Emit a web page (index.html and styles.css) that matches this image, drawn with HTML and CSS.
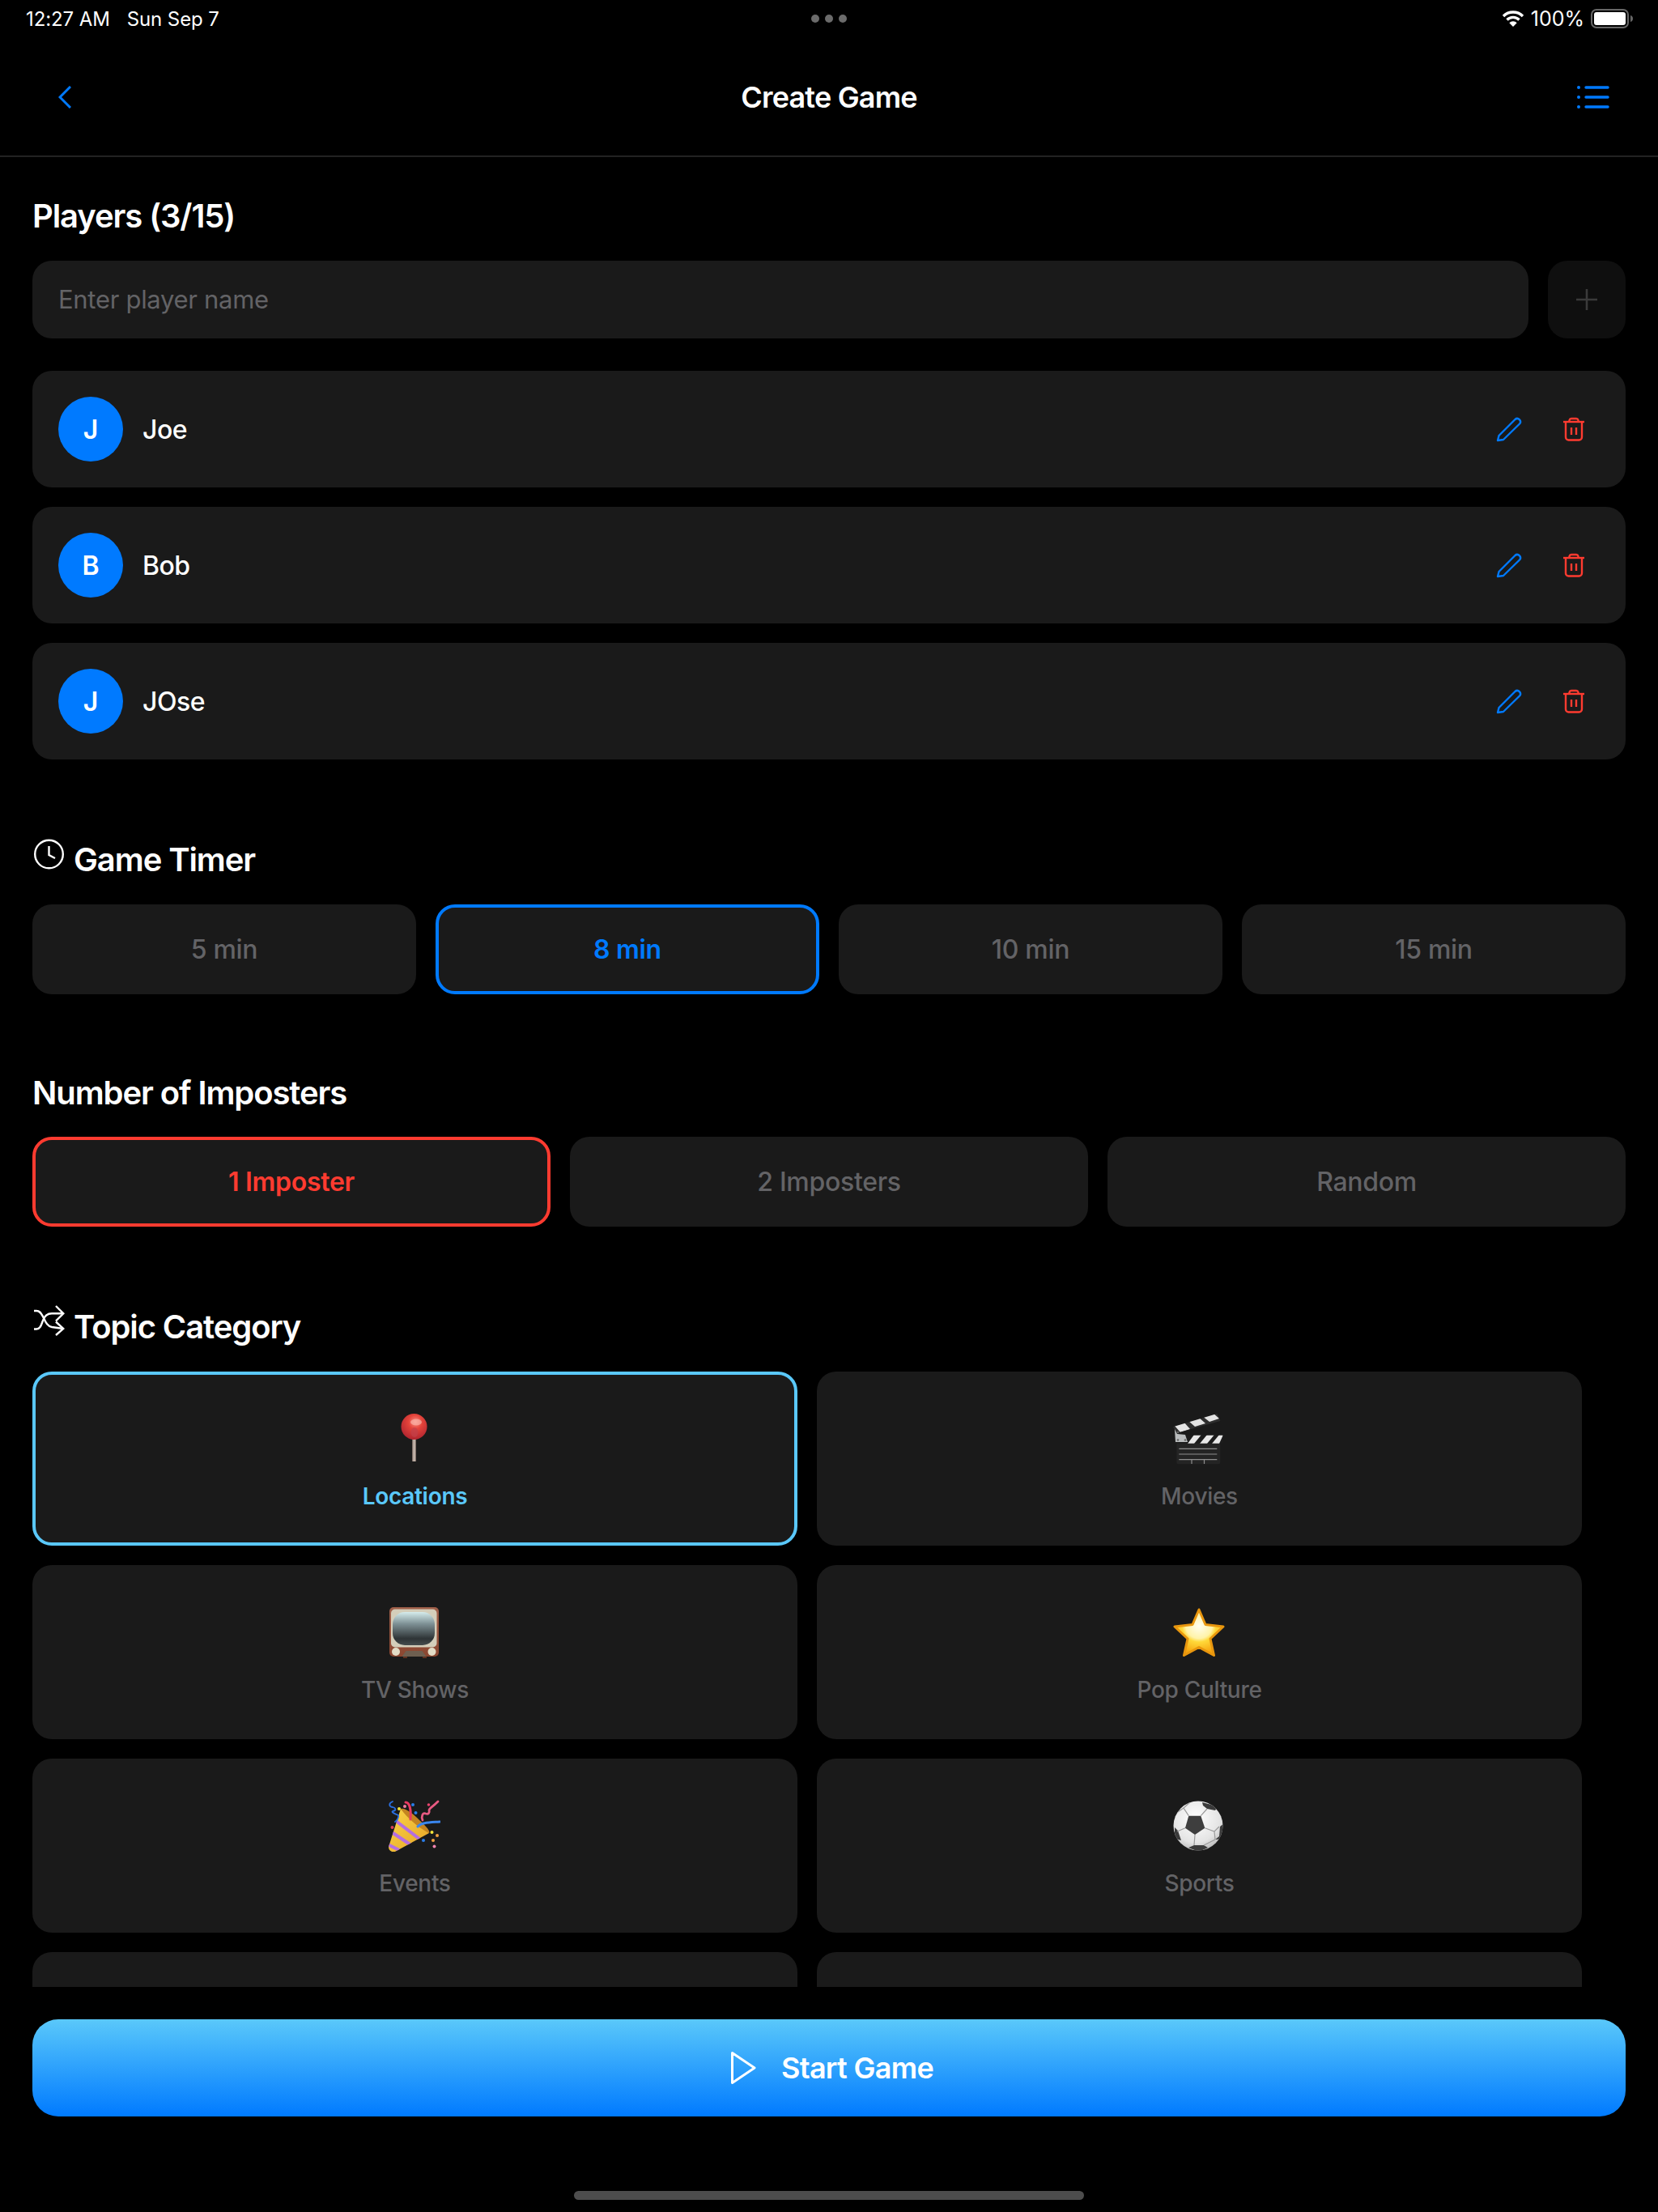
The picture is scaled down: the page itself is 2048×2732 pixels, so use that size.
FILE: index.html
```html
<!DOCTYPE html>
<html>
    <head>
        <meta charset="UTF-8">
        <title>Create Game</title>
        <link rel="stylesheet" href="styles.css">
    </head>
    <body>
        <div class="statusbar">
            <div class="status-left"><span>12:27 AM</span><span>Sun Sep 7</span></div>
            <div class="status-dots"><i></i><i></i><i></i></div>
            <div class="status-right">
                <svg class="wifi" width="28" height="22" viewBox="0 0 28 22"><path d="M2 8A17 17 0 0 1 26 8" fill="none" stroke="#fff" stroke-width="3.4"/><path d="M6.5 12.5A10.6 10.6 0 0 1 21.5 12.5" fill="none" stroke="#fff" stroke-width="3.4"/><path d="M14 21L9.3 16.2A6.6 6.6 0 0 1 18.7 16.2Z" fill="#fff"/></svg>
                <span>100%</span>
                <svg class="battery" width="53" height="24" viewBox="0 0 53 24"><rect x="1" y="1" width="45" height="22" rx="6" fill="none" stroke="#666" stroke-width="2"/><rect x="4" y="4" width="39" height="16" rx="3" fill="#fff"/><path d="M49 8C51 8.500 52 10 52 12S51 15.500 49 16Z" fill="#666"/></svg>
            </div>
        </div>

        <div class="navbar">
            <div class="nav-left">
                <svg width="16" height="28" viewBox="0 0 16 28"><path d="M15 1L2 14L15 27" fill="none" stroke="#007aff" stroke-width="3"/></svg>
            </div>
            <div class="nav-title">Create Game</div>
            <div class="nav-right">
                <svg width="40" height="28" viewBox="0 0 40 28"><g fill="#007aff"><circle cx="2" cy="2" r="2"/><circle cx="2" cy="14" r="2"/><circle cx="2" cy="26" r="2"/></g><g stroke="#007aff" stroke-width="3.400" stroke-linecap="round"><path d="M11 2H38"/><path d="M11 14H38"/><path d="M11 26H38"/></g></svg>
            </div>
        </div>

        <div class="content">
            <h2 class="title players-title">Players (3/15)</h2>
            <div class="add-row">
                <div class="name-input">Enter player name</div>
                <div class="add-btn">
                    <svg width="28" height="28" viewBox="0 0 28 28"><path d="M14 1V27M1 14H27" stroke="#3a3a3a" stroke-width="2.600"/></svg>
                </div>
            </div>
            <div class="player-list">
                <div class="player">
                    <div class="avatar">J</div>
                    <div class="player-name">Joe</div>
                    <svg class="edit-icon" width="32" height="32" viewBox="0 0 32 32"><path d="M2 30L3.500 24L23.500 4A3.900 3.900 0 0 1 29 9.500L9 29Z" fill="none" stroke="#007aff" stroke-width="2.400" stroke-linejoin="round"/></svg>
                    <svg class="trash-icon" width="32" height="32" viewBox="0 0 32 32"><g fill="none" stroke="#ff3b30" stroke-width="2.400" stroke-linejoin="round"><path d="M3 7H29"/><path d="M10.500 7V5A2.800 2.800 0 0 1 13 3H19A2.800 2.800 0 0 1 21.500 5V7"/><path d="M6 7V26A3.500 3.500 0 0 0 9.500 29.500H22.500A3.500 3.500 0 0 0 26 26V7"/><path d="M13 14V23M19 14V23"/></g></svg>
                </div>
                <div class="player">
                    <div class="avatar">B</div>
                    <div class="player-name">Bob</div>
                    <svg class="edit-icon" width="32" height="32" viewBox="0 0 32 32"><path d="M2 30L3.500 24L23.500 4A3.900 3.900 0 0 1 29 9.500L9 29Z" fill="none" stroke="#007aff" stroke-width="2.400" stroke-linejoin="round"/></svg>
                    <svg class="trash-icon" width="32" height="32" viewBox="0 0 32 32"><g fill="none" stroke="#ff3b30" stroke-width="2.400" stroke-linejoin="round"><path d="M3 7H29"/><path d="M10.500 7V5A2.800 2.800 0 0 1 13 3H19A2.800 2.800 0 0 1 21.500 5V7"/><path d="M6 7V26A3.500 3.500 0 0 0 9.500 29.500H22.500A3.500 3.500 0 0 0 26 26V7"/><path d="M13 14V23M19 14V23"/></g></svg>
                </div>
                <div class="player">
                    <div class="avatar">J</div>
                    <div class="player-name">JOse</div>
                    <svg class="edit-icon" width="32" height="32" viewBox="0 0 32 32"><path d="M2 30L3.500 24L23.500 4A3.900 3.900 0 0 1 29 9.500L9 29Z" fill="none" stroke="#007aff" stroke-width="2.400" stroke-linejoin="round"/></svg>
                    <svg class="trash-icon" width="32" height="32" viewBox="0 0 32 32"><g fill="none" stroke="#ff3b30" stroke-width="2.400" stroke-linejoin="round"><path d="M3 7H29"/><path d="M10.500 7V5A2.800 2.800 0 0 1 13 3H19A2.800 2.800 0 0 1 21.500 5V7"/><path d="M6 7V26A3.500 3.500 0 0 0 9.500 29.500H22.500A3.500 3.500 0 0 0 26 26V7"/><path d="M13 14V23M19 14V23"/></g></svg>
                </div>
            </div>

            <h2 class="title section-title">
                <svg class="title-icon" width="40" height="40" viewBox="0 0 40 40"><circle cx="20.500" cy="20" r="17.300" fill="none" stroke="#fff" stroke-width="2.400"/><path d="M20.500 10V21L28 25" fill="none" stroke="#fff" stroke-width="2.400"/></svg>
                Game Timer
            </h2>
            <div class="options four">
                <div class="option">5 min</div>
                <div class="option timer-on">8 min</div>
                <div class="option">10 min</div>
                <div class="option">15 min</div>
            </div>

            <h2 class="title section-title plain">Number of Imposters</h2>
            <div class="options three">
                <div class="option imposter-on">1 Imposter</div>
                <div class="option">2 Imposters</div>
                <div class="option">Random</div>
            </div>

            <h2 class="title section-title">
                <svg class="title-icon" width="40" height="40" viewBox="0 0 40 40"><g fill="none" stroke="#fff" stroke-width="2.400"><path d="M29 1L38.300 10.300L29 19.500"/><path d="M29 20.500L38.300 29L29 37"/><path d="M2 7H5C10 7 11 11 13.500 15C16 20 18 26 24 27L38 29"/><path d="M2 29.500H5C10 29.500 11 24 13 19C15 13 18 10.300 24 10.300H38"/></g></svg>
                Topic Category
            </h2>
            <div class="topics">
                <div class="topic topic-on">
                    <svg class="emoji" width="64" height="64" viewBox="0 0 64 64">
                        <defs>
                            <radialGradient id="pinBall" cx="55%" cy="32%" r="68%"><stop offset="0" stop-color="#f88c80"/><stop offset=".4" stop-color="#e4433a"/><stop offset="1" stop-color="#b02530"/></radialGradient>
                            <linearGradient id="pinStem" x1="0" x2="1" y1="0" y2="0"><stop offset="0" stop-color="#6e5f58"/><stop offset=".5" stop-color="#d0c2b8"/><stop offset="1" stop-color="#7a6a62"/></linearGradient>
                        </defs>
                        <rect x="29" y="30" width="5" height="30" fill="url(#pinStem)"/>
                        <circle cx="31.500" cy="17" r="16" fill="url(#pinBall)"/>
                        <ellipse cx="32" cy="24" rx="4.500" ry="6" fill="#c0404a" opacity=".7"/>
                        <ellipse cx="34" cy="11.500" rx="7" ry="4" fill="#fcc0b4" opacity=".6"/>
                    </svg>
                    <div class="topic-label">Locations</div>
                </div>
                <div class="topic">
                    <svg class="emoji" width="64" height="64" viewBox="0 0 64 64">
                        <defs>
                            <clipPath id="armClip"><path d="M0 17.300L54.300 1L58.300 10L4.300 25Z"/></clipPath>
                            <clipPath id="bandClip"><rect x="1" y="27.700" width="61" height="10" rx="1"/></clipPath>
                        </defs>
                        <path d="M0 17.300L54.300 1L58.300 10L4.300 25Z" fill="#2e2e2e"/>
                        <g clip-path="url(#armClip)" fill="#e4e4e4"><path d="M1 15L13 11L21 20L9 24Z"/><path d="M18 9L31 5L40 13L27 17Z"/><path d="M36 4L49 0L57 7L45 11Z"/></g>
                        <rect x="4.300" y="37" width="54" height="26.300" rx="2.500" fill="#242424"/>
                        <rect x="1" y="27.700" width="61" height="10" rx="1" fill="#1c1c1c"/>
                        <g clip-path="url(#bandClip)" fill="#e8e8e8"><path d="M18 38L26 27H35L26 38Z"/><path d="M33 38L42 27H51L42 38Z"/><path d="M48 38L57 27H62L57 38Z"/></g>
                        <path d="M2 20L5 26L15 27L18 36H3Z" fill="#b9bcbd"/>
                        <circle cx="6" cy="33.500" r="1.300" fill="#666"/><circle cx="15" cy="33.500" r="1.300" fill="#666"/><circle cx="6" cy="24" r="1.300" fill="#666"/>
                        <g stroke="#8e8e8e" stroke-width="1.200"><path d="M7.300 44.300H54.300"/><path d="M7.300 51H54.300"/><path d="M7.300 57.700H54.300"/><path d="M23 57.700V63M38.500 57.700V63"/></g>
                    </svg>
                    <div class="topic-label">Movies</div>
                </div>
                <div class="topic">
                    <svg class="emoji" width="64" height="64" viewBox="0 0 64 64">
                        <defs>
                            <linearGradient id="tvScreen" x1="0" x2="0" y1="0" y2="1"><stop offset="0" stop-color="#d5ecec"/><stop offset=".35" stop-color="#7f9296"/><stop offset=".8" stop-color="#2e3436"/><stop offset="1" stop-color="#454c4d"/></linearGradient>
                            <linearGradient id="tvWood" x1="0" x2="0" y1="0" y2="1"><stop offset="0" stop-color="#a0604a"/><stop offset="1" stop-color="#8a4630"/></linearGradient>
                        </defs>
                        <rect x="18" y="60" width="5" height="4" fill="#5e2f1e"/><rect x="42" y="60" width="5" height="4" fill="#5e2f1e"/>
                        <rect x="1" y="1" width="61" height="61" rx="5" fill="url(#tvWood)"/>
                        <rect x="3" y="3.500" width="56.500" height="47" rx="5" fill="#d4ceba"/>
                        <rect x="5" y="7" width="52" height="41" rx="15" fill="url(#tvScreen)"/>
                        <circle cx="9" cy="56" r="5" fill="#e2dcc6"/><circle cx="53.500" cy="56" r="5" fill="#e2dcc6"/>
                        <path d="M16.500 62L21.500 55H41.500L46.500 62Z" fill="#6e5f50"/>
                    </svg>
                    <div class="topic-label">TV Shows</div>
                </div>
                <div class="topic">
                    <svg class="emoji" width="64" height="64" viewBox="0 0 64 64">
                        <defs>
                            <radialGradient id="starFill" cx="50%" cy="36%" r="60%"><stop offset="0" stop-color="#fffef0"/><stop offset=".45" stop-color="#fff3a8"/><stop offset=".58" stop-color="#ffd93a"/><stop offset="1" stop-color="#f6a50e"/></radialGradient>
                        </defs>
                        <path d="M32 4L40 22.500L62 25L46 40L50.500 60.500L32 50.500L13.500 60.500L18 40L2 25L24 22.500Z" fill="url(#starFill)" stroke="#e8960e" stroke-width="3" stroke-linejoin="round"/>
                    </svg>
                    <div class="topic-label">Pop Culture</div>
                </div>
                <div class="topic">
                    <svg class="emoji" width="64" height="64" viewBox="0 0 64 64">
                        <defs>
                            <linearGradient id="coneFill" x1="0" x2="1" y1="0" y2="1"><stop offset="0" stop-color="#fad648"/><stop offset="1" stop-color="#e6a226"/></linearGradient>
                            <clipPath id="coneClip"><path d="M0 58L15 11L50 41L7 64.500Q0 64 0 58Z"/></clipPath>
                        </defs>
                        <path d="M0 58L15 11L50 41L7 64.500Q0 64 0 58Z" fill="url(#coneFill)"/>
                        <g clip-path="url(#coneClip)" stroke="#b46ee0" stroke-width="4" fill="none"><path d="M9 26L39 49"/><path d="M4 40L28 56"/><path d="M-1 55L13 62"/></g>
                        <path d="M15 11C20 9 30 17 38 25C46 32 52 39 50 41C40 36 25 25 15 11Z" fill="#c48420"/>
                        <g fill="none" stroke-linecap="round">
                            <path d="M5 2C0 4 0 8 5 9C9 10 10 13 5 14C3 15 7 17 12 19C13 22 10 26 8 27" stroke="#2a6fe0" stroke-width="1.800"/>
                            <path d="M21 3C26 3 28 12 27 24" stroke="#ea3a62" stroke-width="3"/>
                            <path d="M42 25C40 21 42 15 46 17C49 18 51 16 50 13C50 10 53 10 61 2" stroke="#e85a82" stroke-width="2.800"/>
                            <path d="M36 33C40 28 50 28 63 27" stroke="#3a86ee" stroke-width="3"/>
                        </g>
                        <circle cx="13" cy="11" r="2" fill="#f5e43a"/><circle cx="20" cy="8" r="2" fill="#f07aa0"/><circle cx="30" cy="6" r="2" fill="#2a7de8"/><circle cx="33.500" cy="16" r="2" fill="#2a7de8"/><circle cx="49.500" cy="6" r="1.800" fill="#e8456e"/><circle cx="4.500" cy="34" r="2" fill="#d84058"/><circle cx="53.500" cy="40" r="2" fill="#f5e43a"/><circle cx="60" cy="44" r="2" fill="#f0a040"/><circle cx="43" cy="50" r="2" fill="#2a7de8"/><circle cx="55" cy="50" r="2" fill="#f0a040"/><circle cx="56.500" cy="57.500" r="2" fill="#f084b0"/>
                    </svg>
                    <div class="topic-label">Events</div>
                </div>
                <div class="topic">
                    <svg class="emoji" width="64" height="64" viewBox="0 0 64 64">
                        <defs>
                            <radialGradient id="ballFill" cx="45%" cy="35%" r="70%"><stop offset="0" stop-color="#fff"/><stop offset=".7" stop-color="#e4e4e4"/><stop offset="1" stop-color="#b4b4b4"/></radialGradient>
                            <clipPath id="ballClip"><circle cx="31" cy="32" r="30.500"/></clipPath>
                        </defs>
                        <circle cx="31" cy="32" r="30.500" fill="url(#ballFill)"/>
                        <g clip-path="url(#ballClip)">
                            <path d="M19.300 19.700H34.300L39.300 34.700L27 43L15 34.700Z" fill="#3e3e3e"/>
                            <path d="M36 3L55 8L52 13L42 11L37 7Z" fill="#3a3a3a"/>
                            <path d="M63 29L58 33L57 45L52 49L63 48Z" fill="#3a3a3a"/>
                            <path d="M19 59L26 56H38L43 59L32 64Z" fill="#3a3a3a"/>
                            <path d="M2 34L6 38L10 50L2 48Z" fill="#3a3a3a"/>
                            <path d="M19.300 19.700L13 10L22 2M34.300 19.700L42 11M39.300 34.700L51 39L57 33M51 39L52 49M27 43L26 56M52 49L38 56M15 34.700L5 39M13 10L3 17" fill="none" stroke="#9a9a9a" stroke-width="1.200"/>
                        </g>
                    </svg>
                    <div class="topic-label">Sports</div>
                </div>
                <div class="topic"></div>
                <div class="topic"></div>
            </div>
        </div>

        <div class="footer">
            <div class="start-btn">
                <svg width="40" height="42" viewBox="0 0 40 42"><path d="M9.500 2.500L37 21L9.500 39.500Z" fill="none" stroke="#fff" stroke-width="3" stroke-linejoin="round"/></svg>
                <span>Start Game</span>
            </div>
            <div class="home-bar"></div>
        </div>
    </body>
</html>
```

FILE: styles.css
```css
* {
    box-sizing: border-box;
}
html, body {
    margin: 0;
    height: 100%;
}
body {
    background-color: #000;
    color: #fff;
    font-family: Inter, "Liberation Sans", sans-serif;
    overflow: hidden;
}

/* status bar */
.statusbar {
    height: 46px;
    display: grid;
    grid-template-columns: 1fr auto 1fr;
    align-items: center;
    padding: 0 30px;
    font-size: 24px;
}
.status-left {
    display: flex;
    gap: 21px;
    letter-spacing: -0.1px;
    padding-left: 2px;
}
.status-dots {
    display: flex;
    gap: 7px;
}
.status-dots i {
    width: 10px;
    height: 10px;
    border-radius: 50%;
    background-color: #6b6b6b;
}
.status-right {
    display: flex;
    justify-content: flex-end;
    align-items: center;
    gap: 8px;
    font-size: 25px;
}

/* nav */
.navbar {
    height: 148px;
    display: grid;
    grid-template-columns: 1fr auto 1fr;
    align-items: center;
    padding: 2px 60px 0;
    border-bottom: 2px solid #222;
}
.nav-left {
    padding-left: 12px;
}
.nav-left svg, .nav-right svg {
    display: block;
}
.nav-right {
    display: flex;
    justify-content: flex-end;
}
.nav-title {
    font-size: 36px;
    font-weight: 600;
    letter-spacing: -0.8px;
}

/* main scroll area */
.content {
    height: 2260px;
    overflow: hidden;
    padding: 49px 40px 0;
}
.title {
    margin: 0;
    font-size: 40px;
    line-height: 48px;
    font-weight: 600;
    letter-spacing: -1.1px;
}
.players-title {
    margin-bottom: 31px;
}
.add-row {
    display: flex;
    gap: 24px;
    margin-bottom: 40px;
}
.name-input {
    flex: 1;
    height: 96px;
    display: flex;
    align-items: center;
    padding: 0 32px 2px;
    background-color: #1a1a1a;
    border-radius: 24px;
    color: #636366;
    font-size: 31px;
    letter-spacing: -0.3px;
}
.add-btn {
    width: 96px;
    height: 96px;
    display: flex;
    align-items: center;
    justify-content: center;
    background-color: #0f0f0f;
    border-radius: 24px;
}
.player-list {
    display: flex;
    flex-direction: column;
    gap: 24px;
}
.player {
    height: 144px;
    display: flex;
    align-items: center;
    padding: 0 48px 0 32px;
    background-color: #1a1a1a;
    border-radius: 24px;
}
.avatar {
    width: 80px;
    height: 80px;
    display: flex;
    align-items: center;
    justify-content: center;
    margin-right: 24px;
    background-color: #007aff;
    border-radius: 50%;
    font-size: 32px;
    font-weight: 600;
}
.player-name {
    flex: 1;
    font-size: 32px;
    font-weight: 500;
    letter-spacing: -0.5px;
}
.edit-icon {
    margin-right: 48px;
}

.section-title {
    margin-top: 100px;
    margin-bottom: 31px;
    display: flex;
    align-items: center;
    gap: 10px;
}
.section-title.plain {
    margin-top: 98px;
    margin-bottom: 30px;
}
.title-icon {
    margin-top: -14px;
    margin-right: 1px;
}
.options {
    display: grid;
    gap: 24px;
}
.options.four {
    grid-template-columns: repeat(4, 1fr);
}
.options.three {
    grid-template-columns: repeat(3, 1fr);
}
.option {
    height: 111px;
    display: flex;
    align-items: center;
    justify-content: center;
    background-color: #1a1a1a;
    border-radius: 24px;
    color: #636366;
    font-size: 32px;
    font-weight: 500;
    letter-spacing: -0.3px;
}
.timer-on {
    border: 4px solid #007aff;
    color: #007aff;
    font-weight: 600;
}
.imposter-on {
    border: 4px solid #ff3b30;
    color: #ff3b30;
    font-weight: 600;
}

.topics {
    display: grid;
    grid-template-columns: repeat(2, 945px);
    grid-auto-rows: 215px;
    gap: 24px;
}
.topic {
    display: flex;
    flex-direction: column;
    align-items: center;
    padding-top: 51px;
    background-color: #1a1a1a;
    border-radius: 24px;
}
.topic-on {
    padding-top: 47px;
    border: 4px solid #5ac8fa;
}
.emoji {
    margin-right: 2px;
}
.topic-label {
    margin-top: 22px;
    line-height: 34px;
    color: #636366;
    font-size: 28px;
    font-weight: 500;
    letter-spacing: -0.3px;
}
.topic-on .topic-label {
    color: #5ac8fa;
    font-weight: 600;
}

/* bottom */
.footer {
    padding: 40px 40px 0;
}
.start-btn {
    height: 120px;
    display: flex;
    align-items: center;
    justify-content: center;
    gap: 30px;
    background: linear-gradient(180deg, #5ac8fa, #007aff);
    border-radius: 32px;
    font-size: 36px;
    font-weight: 600;
    letter-spacing: -0.7px;
}
.home-bar {
    width: 630px;
    height: 11px;
    margin: 92px auto 0;
    background-color: #4d4d4d;
    border-radius: 6px;
}
```
